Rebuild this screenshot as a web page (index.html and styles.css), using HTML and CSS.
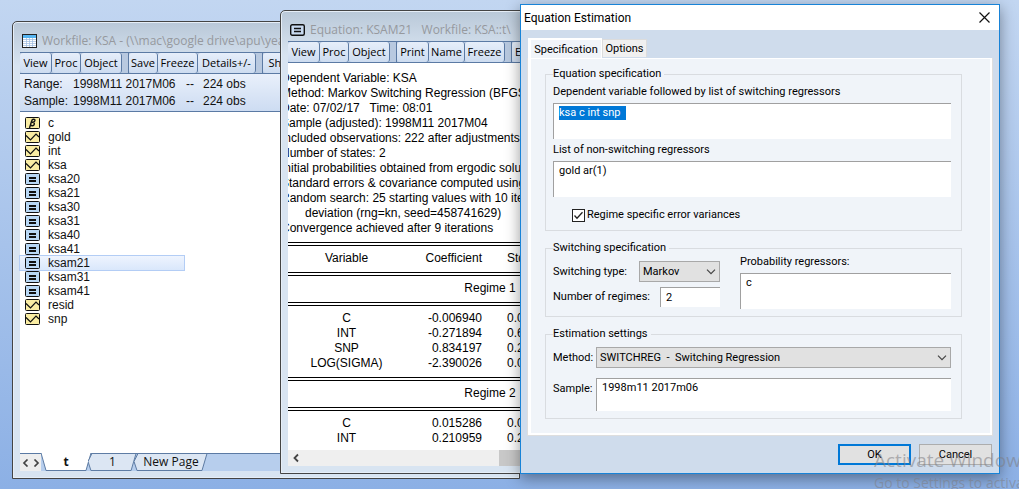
FILE: index.html
```html
<!DOCTYPE html>
<html lang="en">
<head>
<meta charset="utf-8">
<title>Equation Estimation</title>
<link rel="stylesheet" href="styles.css">
</head>
<body class="desktop">
<svg class="defs" width="0" height="0" aria-hidden="true">
  <symbol id="coef" viewBox="0 0 15 12"><rect x=".5" y=".5" width="14" height="11" rx="1" fill="#faeda3" stroke="#111"/><path d="M4.500 11 6.800 3.500C7.200 2 10.300 1.600 9.900 3.600 9.700 5 8 5.300 7 5.200 9 5.200 9.600 6.100 9.200 7.500 8.700 9.200 6.300 9 5.600 8" fill="none" stroke="#111" stroke-width="1.400"/></symbol>
  <symbol id="series" viewBox="0 0 15 12"><rect x=".5" y=".5" width="14" height="11" rx="1" fill="#faeda3" stroke="#111"/><path d="M1 4.500 5.500 9 11 3 14 6" fill="none" stroke="#111" stroke-width="1.200"/></symbol>
  <symbol id="eq" viewBox="0 0 15 12"><rect x=".5" y=".5" width="14" height="11" rx="1" fill="#b9d8f5" stroke="#111"/><path d="M4 5H11M4 8H11" stroke="#111" stroke-width="2"/></symbol>
  <symbol id="chev" viewBox="0 0 10 6"><path d="M1 .7 5 4.700 9 .7" fill="none" stroke="#444" stroke-width="1.200"/></symbol>
</svg>

<section class="win workfile">
  <header class="win-title">
    <svg width="15" height="14" viewBox="0 0 15 14"><rect x=".5" y=".5" width="14" height="13" fill="#fff" stroke="#222"/><path d="M1 2.500H14" stroke="#55b4f0" stroke-width="3"/><path d="M1 5.500H14M1 7.500H14M1 9.500H14M1 11.500H14M4.500 4V13M7.500 4V13M10.500 4V13" stroke="#9dbbe0" stroke-width=".7"/></svg>
    <span>Workfile: KSA - (\\mac\google drive\apu\year 2</span>
  </header>
  <nav class="toolbar">
    <button class="w32">View</button><button class="w29">Proc</button><button class="w41">Object</button><i class="gap"></i><button class="w29">Save</button><button class="w40">Freeze</button><button class="w58">Details+/-</button><i class="gap"></i><button class="w40">Show</button>
  </nav>
  <dl class="info">
    <dt>Range:</dt><dd>1998M11 2017M06</dd><dd>--</dd><dd>224 obs</dd>
    <dt>Sample:</dt><dd>1998M11 2017M06</dd><dd>--</dd><dd>224 obs</dd>
  </dl>
  <ul class="objects">
    <li><svg class="ic"><use href="#coef"/></svg>c</li>
    <li><svg class="ic"><use href="#series"/></svg>gold</li>
    <li><svg class="ic"><use href="#series"/></svg>int</li>
    <li><svg class="ic"><use href="#series"/></svg>ksa</li>
    <li><svg class="ic"><use href="#eq"/></svg>ksa20</li>
    <li><svg class="ic"><use href="#eq"/></svg>ksa21</li>
    <li><svg class="ic"><use href="#eq"/></svg>ksa30</li>
    <li><svg class="ic"><use href="#eq"/></svg>ksa31</li>
    <li><svg class="ic"><use href="#eq"/></svg>ksa40</li>
    <li><svg class="ic"><use href="#eq"/></svg>ksa41</li>
    <li class="selected"><svg class="ic"><use href="#eq"/></svg>ksam21</li>
    <li><svg class="ic"><use href="#eq"/></svg>ksam31</li>
    <li><svg class="ic"><use href="#eq"/></svg>ksam41</li>
    <li><svg class="ic"><use href="#series"/></svg>resid</li>
    <li><svg class="ic"><use href="#series"/></svg>snp</li>
  </ul>
  <footer class="pages">
    <div class="arrows"><svg width="18" height="8" viewBox="0 0 18 8"><path d="M5.500 .5 2 4 5.500 7.500M12.500 .5 16 4 12.500 7.500" fill="none" stroke="#444" stroke-width="1.700"/></svg></div>
    <button class="page page-t"><svg viewBox="0 0 50 18" preserveAspectRatio="none"><path d="M0 0 5 17.500H45L50 0" fill="#fff" stroke="#5d7ba3"/></svg><span>t</span></button>
    <button class="page page-1"><svg viewBox="0 0 50 18" preserveAspectRatio="none"><path d="M4 .5 0 8.500 3 17.500H44L49 .5Z" fill="#dce6f3" stroke="#5d7ba3"/></svg><span>1</span></button>
    <button class="page page-new"><svg viewBox="0 0 74 18" preserveAspectRatio="none"><path d="M4 .5 0 8.500 3 17.500H68L73 .5Z" fill="#dce6f3" stroke="#5d7ba3"/></svg><span>New Page</span></button>
  </footer>
</section>

<section class="win equation">
  <header class="win-title">
    <svg width="15" height="12" viewBox="0 0 15 12"><rect x=".7" y=".7" width="13.600" height="10.600" rx="1.500" fill="#c8daf0" stroke="#111" stroke-width="1.400"/><path d="M4 4.500H11M4 7.500H11" stroke="#111" stroke-width="1.600"/></svg>
    <span>Equation: KSAM21 &nbsp; Workfile: KSA::t\</span>
  </header>
  <nav class="toolbar">
    <button class="w32">View</button><button class="w29">Proc</button><button class="w41">Object</button><i class="gap"></i><button class="w32">Print</button><button class="w36">Name</button><button class="w40">Freeze</button><i class="gap"></i><button class="w58 start">Estimate</button>
  </nav>
  <div class="output">
    <div class="sheet">
      <p>Dependent Variable: KSA</p>
      <p>Method: Markov Switching Regression (BFGS</p>
      <p>Date: 07/02/17 &nbsp; Time: 08:01</p>
      <p>Sample (adjusted): 1998M11 2017M04</p>
      <p>Included observations: 222 after adjustments</p>
      <p>Number of states: 2</p>
      <p>Initial probabilities obtained from ergodic solution</p>
      <p>Standard errors &amp; covariance computed using</p>
      <p>Random search: 25 starting values with 10 iterations</p>
      <p class="indent">deviation (rng=kn, seed=458741629)</p>
      <p>Convergence achieved after 9 iterations</p>
      <table class="results">
        <colgroup><col class="c-var"><col class="c-coef"><col></colgroup>
        <tbody>
        <tr class="rule"><td colspan="3"><hr></td></tr>
        <tr><th>Variable</th><th class="num">Coefficient</th><th class="se">Std. Error</th></tr>
        <tr class="rule"><td colspan="3"><hr></td></tr>
        <tr><th colspan="3">Regime 1</th></tr>
        <tr class="rule"><td colspan="3"><hr></td></tr>
        <tr><td>C</td><td class="num">-0.006940</td><td class="se">0.0</td></tr>
        <tr><td>INT</td><td class="num">-0.271894</td><td class="se">0.6</td></tr>
        <tr><td>SNP</td><td class="num">0.834197</td><td class="se">0.2</td></tr>
        <tr><td>LOG(SIGMA)</td><td class="num">-2.390026</td><td class="se">0.0</td></tr>
        <tr class="rule"><td colspan="3"><hr></td></tr>
        <tr><th colspan="3">Regime 2</th></tr>
        <tr class="rule"><td colspan="3"><hr></td></tr>
        <tr><td>C</td><td class="num">0.015286</td><td class="se">0.0</td></tr>
        <tr><td>INT</td><td class="num">0.210959</td><td class="se">0.2</td></tr>
        </tbody>
      </table>
    </div>
  </div>
  <div class="hscroll"><svg width="16" height="16" viewBox="0 0 16 16"><path d="M10 4.500 6.500 8 10 11.500" fill="none" stroke="#444" stroke-width="1.800"/></svg><div class="thumb"></div></div>
</section>

<section class="dialog" role="dialog" aria-labelledby="dlg-title">
  <header class="dialog-title">
    <h1 id="dlg-title">Equation Estimation</h1>
    <button class="close" aria-label="Close"><svg width="11" height="11" viewBox="0 0 11 11"><path d="M.5 .5 10.500 10.500M10.500 .5 .5 10.500" stroke="#111" stroke-width="1.200"/></svg></button>
  </header>
  <form class="dialog-body">
    <div class="tabs" role="tablist">
      <button type="button" role="tab" class="tab active" aria-selected="true">Specification</button>
      <button type="button" role="tab" class="tab">Options</button>
    </div>
    <div class="panel">
      <fieldset class="eq-spec">
        <legend>Equation specification</legend>
        <label for="dep">Dependent variable followed by list of switching regressors</label>
        <textarea id="dep">ksa c int snp  </textarea>
        <label for="nonsw">List of non-switching regressors</label>
        <textarea id="nonsw">gold ar(1)</textarea>
        <div class="check">
          <span class="box"><input type="checkbox" id="regime" checked><svg viewBox="0 0 13 13"><path d="M2.500 6.500 5 9.300 10.500 3.300" fill="none" stroke="#222" stroke-width="1.300"/></svg></span>
          <label for="regime">Regime specific error variances</label>
        </div>
      </fieldset>
      <fieldset class="sw-spec">
        <legend>Switching specification</legend>
        <div class="cols">
          <div class="left">
            <div class="row"><label for="swtype">Switching type:</label>
              <span class="pick narrow"><select id="swtype"><option>Markov</option></select><svg><use href="#chev"/></svg></span></div>
            <div class="row"><label for="nreg">Number of regimes:</label><input class="text" id="nreg" type="text" value="2"></div>
          </div>
          <div class="right">
            <label for="prob">Probability regressors:</label>
            <textarea id="prob">c</textarea>
          </div>
        </div>
      </fieldset>
      <fieldset class="est">
        <legend>Estimation settings</legend>
        <div class="settings">
          <label for="method">Method:</label>
          <span class="pick"><select id="method"><option>SWITCHREG &nbsp;- &nbsp;Switching Regression</option></select><svg><use href="#chev"/></svg></span>
          <label for="sample" class="top">Sample:</label>
          <textarea id="sample">1998m11 2017m06</textarea>
        </div>
      </fieldset>
    </div>
    <div class="actions"><button type="button" class="btn primary">OK</button><button type="button" class="btn">Cancel</button></div>
  </form>
</section>

<aside class="watermark"><p class="wm-big">Activate Windows</p><p class="wm-small">Go to Settings to activate Windows.</p></aside>
<script src="main.js"></script>
</body>
</html>
```
FILE: styles.css
```css
* { box-sizing: border-box; }
.desktop {
  margin: 0; position: relative; min-height: 100vh; overflow: hidden;
  background: linear-gradient(#c2d6f1, #8cb0e5);
  font: 12px/14px "Liberation Sans", Arial, sans-serif; color: #111;
}
.defs { position: absolute; }
button { font: inherit; color: inherit; padding: 0; margin: 0; }

/* document windows */
.win {
  position: absolute; border: 1px solid #444; border-radius: 5px 5px 0 0;
  padding: 0 7px 7px; display: flex; flex-direction: column;
  background: linear-gradient(#b9c8d8, #d8e4f1 44px, #d8e4f1);
  box-shadow: inset 0 0 0 1px #e6eef7;
}
.workfile { left: 12px; top: 21px; width: 508px; }
.equation { left: 280px; top: 10px; width: 508px; }
.win-title {
  height: 30px; display: flex; align-items: center; gap: 5px; padding: 7px 0 0 2px;
  font-family: "Open Sans", sans-serif; color: #96999e; white-space: nowrap; flex: none;
}
.toolbar {
  display: flex; height: 22px; background: #b8c9e0; overflow: hidden; flex: none;
  border-top: 1px solid #5b7aa4; border-bottom: 1px solid #5b7aa4;
  font-family: "Open Sans", sans-serif;
}
.toolbar button {
  border: 0; border-right: 1px solid #5b7aa4; border-radius: 3px; flex: none;
  background: linear-gradient(#e6eefa, #cddcf0); white-space: nowrap; font-size: 11px; color: #000;
}
.toolbar .gap { width: 7px; flex: none; border-right: 1px solid #5b7aa4; }
.toolbar .start { text-align: left; padding-left: 3px; }
.w29 { width: 29px; } .w32 { width: 32px; } .w36 { width: 36px; }
.w40 { width: 40px; } .w41 { width: 41px; } .w58 { width: 58px; }

.info {
  margin: 0; padding: 2px 4px 1px; display: grid; grid-template-columns: 49px 113px 17px auto;
  line-height: 17px; background: linear-gradient(#e9f0fb, #cddcf2); border-bottom: 1px solid #5b7aa4;
}
.info dt, .info dd { margin: 0; }
.objects {
  margin: 0; padding: 4px 0 0; list-style: none; background: #fff; min-height: 341px;
}
.objects li { display: flex; align-items: center; gap: 8px; height: 14px; width: 164px; padding-left: 5px; }
.objects .selected { background: linear-gradient(#eef4fe, #d9e7fb); box-shadow: 0 0 0 1px #b3cdf5; }
.ic { width: 15px; height: 12px; flex: none; }
.pages { display: flex; height: 18px; background: #b7ceed; border-top: 1px solid #5b7aa4; font-family: "Open Sans", sans-serif; }
.arrows { width: 21px; background: #eee; display: grid; place-items: center; }
.page { display: grid; border: 0; background: none; height: 18px; margin-top: -1px; padding: 0; }
.page > * { grid-area: 1 / 1; width: 100%; height: 18px; }
.page span { line-height: 18px; }
.page-t { width: 50px; font-weight: bold; margin-right: -3px; }
.page-1 { width: 49px; margin-right: -3px; }
.page-new { width: 74px; }

.output { background: #fff; overflow: hidden; padding-top: 8px; height: 387px; }
.sheet { margin-left: -7px; width: 418px; line-height: 15px; white-space: nowrap; color: #000; }
.sheet p { margin: 0; }
.sheet .indent { padding-left: 24px; }
.results { width: 418px; table-layout: fixed; border-collapse: collapse; text-align: center; }
.results th, .results td { padding: 0; font-weight: normal; height: 15px; }
.c-var { width: 131px; } .c-coef { width: 70px; }
.results .num { text-align: right; }
.results .se { text-align: left; padding-left: 25px; }
.results hr { margin: 0; height: 4px; border: solid #000; border-width: 1px 0; }
.results .rule { line-height: 4px; }
.hscroll { display: flex; height: 16px; background: #efefef; }
.thumb { margin-left: 195px; flex: 1; background: #c8c8c8; }

/* dialog */
.dialog {
  position: absolute; left: 520px; top: 4px; width: 480px; border: 1px solid #1883d7;
  background: #cfdcec; box-shadow: 0 4px 14px rgba(0, 0, 0, .4);
  font: 11px/14px Roboto, "Open Sans", sans-serif; color: #000;
}
.dialog-title { display: flex; justify-content: space-between; align-items: center; height: 25px; padding: 0 9px 0 3px; background: #fff; }
.dialog-title h1 { margin: 0; font-size: 12px; font-weight: normal; color: #000; }
.close { border: 0; background: none; display: grid; }
.dialog-body { padding: 8px 7px; }
.tabs { display: flex; align-items: flex-end; height: 20px; }
.tab { border: 1px solid #dcdcdc; border-bottom: 0; background: #f0f0f0; height: 18px; width: 45px; margin-bottom: 1px; }
.tab.active { background: #f0f4f9; border: solid #fff; border-width: 2px 1px 0 3px; height: 21px; width: 74px; margin-bottom: -1px; }
.panel {
  background: #f0f4f9; border: solid #fff; border-width: 1px 2px 2px 3px; outline: 1px solid #dedede; outline-offset: 0;
  padding: 8px 28px 14px 14px; display: flex; flex-direction: column; gap: 10px; clip-path: inset(0 -1px -1px -1px);
}
fieldset { min-width: 0; margin: 0; padding: 0 10px 7px 7px; border: 1px solid #d9dce0; }
legend { padding: 0 3px 0 0; }
legend, label { line-height: 14px; }
.eq-spec { display: block; }
.eq-spec > label { display: block; margin-top: 4px; }
textarea, .text {
  display: block; width: 100%; resize: none; overflow: hidden; margin: 0; outline: 0; border-radius: 0;
  border: solid #a0a0a0; border-width: 1px 0 0 1px; background: #fff;
  font: inherit; color: #000; padding: 2px 5px; height: 36px;
}
.eq-spec textarea { margin: 4px 0; }
::selection { background: #0078d7; color: #fff; }
.check { display: flex; align-items: center; gap: 2px; padding: 7px 0 1px 19px; }
.box, .pick { display: grid; }
.box > *, .pick > * { grid-area: 1 / 1; }
.box, .box > * { width: 13px; height: 13px; }
.box input { appearance: none; margin: 0; border: 1px solid #222; background: #fff; }
.box svg, .pick svg { pointer-events: none; }
.cols { display: flex; gap: 20px; }
.left { width: 167px; display: flex; flex-direction: column; gap: 5px; padding-top: 6px; }
.right { flex: 1; display: flex; flex-direction: column; gap: 4px; }
.row { display: flex; justify-content: space-between; align-items: center; }
.text { width: 60px; height: 20px; }
.pick select {
  appearance: none; width: 100%; height: 21px; border: 1px solid #a8a8a8; border-radius: 0;
  background: #e1e1e1; padding: 0 3px; font: inherit; color: #000;
}
.pick svg { width: 10px; height: 6px; justify-self: end; align-self: center; margin-right: 4px; }
.narrow { width: 81px; }
.settings { display: grid; grid-template-columns: 43px 1fr; row-gap: 10px; padding-top: 6px; align-items: center; }
.settings textarea { height: 33px; }
.settings .top { align-self: start; padding-top: 4px; }
.actions { display: flex; justify-content: flex-end; gap: 8px; padding-top: 9px; }
.btn { width: 73px; height: 21px; border: 1px solid #adadad; background: #e1e1e1; }
.btn.primary { border: 2px solid #0078d7; }

.watermark {
  position: absolute; left: 874px; right: 0; top: 447px; overflow: hidden; pointer-events: none;
  font-family: "Open Sans", sans-serif; color: rgba(125, 125, 130, .55);
}
.watermark p { margin: 0; white-space: nowrap; }
.wm-big { font-size: 19px; line-height: 26px; }
.wm-small { font-size: 14px; line-height: 20px; }
```
FILE: main.js
```js
const dep = document.getElementById("dep");
dep.focus();
dep.select();
```
